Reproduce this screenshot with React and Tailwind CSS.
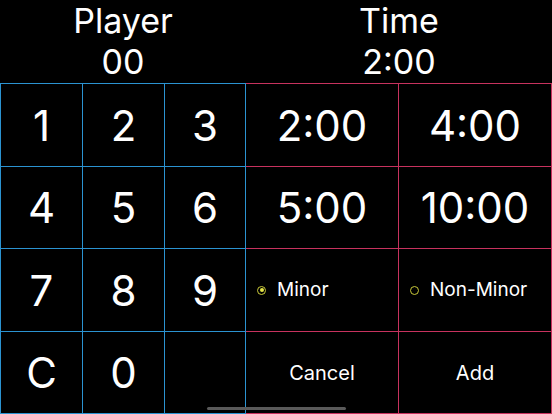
import React, { useState } from "react";

const keys = ["1", "2", "3", "4", "5", "6", "7", "8", "9", "C", "0", ""];
const times = ["2:00", "4:00", "5:00", "10:00"];

const Radio = ({ on }) => (
  <span className="flex h-[9px] w-[9px] items-center justify-center rounded-full border border-[#c9c93a]">
    {on && <span className="h-[4px] w-[4px] rounded-full bg-[#e6e64a]"></span>}
  </span>
);

export default function App() {
  const [player, setPlayer] = useState("00");
  const [time, setTime] = useState("2:00");
  const [minor, setMinor] = useState(true);

  const press = (k) => {
    if (k === "") return;
    if (k === "C") return setPlayer("00");
    setPlayer((p) => (p + k).slice(-2));
  };

  return (
    <div
      className="relative h-[414px] w-[552px] overflow-hidden bg-black text-white"
      style={{ fontFamily: "Inter, 'Open Sans', sans-serif" }}
    >
      {/* Header */}
      <div className="flex h-[83px]">
        <div className="flex w-[246px] flex-col items-center text-[34px] leading-[41px]">
          <span>Player</span>
          <span>{player}</span>
        </div>
        <div className="flex flex-1 flex-col items-center text-[34px] leading-[41px]">
          <span>Time</span>
          <span>{time}</span>
        </div>
      </div>

      <div className="flex h-[331px]">
        {/* Keypad */}
        <div className="grid w-[246px] grid-cols-[82px_82px_81px] grid-rows-[83px_82px_83px_82px] border-l border-t border-[#2b93d1]">
          {keys.map((k, i) => (
            <button
              key={i}
              onClick={() => press(k)}
              className="flex items-center justify-center border-b border-r border-[#2b93d1] text-[42px]"
            >
              {k}
            </button>
          ))}
        </div>

        {/* Time panel */}
        <div className="grid w-[306px] grid-cols-[153px_153px] grid-rows-[83px_82px_83px_82px] border-t border-[#c7325e]">
          {times.map((t) => (
            <button
              key={t}
              onClick={() => setTime(t)}
              className="flex items-center justify-center border-b border-r border-[#c7325e] text-[42px]"
            >
              {t}
            </button>
          ))}
          <button
            onClick={() => setMinor(true)}
            className="flex items-center gap-[11px] border-b border-r border-[#c7325e] pl-[11px] text-[19px]"
          >
            <Radio on={minor} />
            <span>Minor</span>
          </button>
          <button
            onClick={() => setMinor(false)}
            className="flex items-center gap-[11px] border-b border-r border-[#c7325e] pl-[11px] text-[19px]"
          >
            <Radio on={!minor} />
            <span>Non-Minor</span>
          </button>
          <button className="flex items-center justify-center border-b border-r border-[#c7325e] text-[20px]">
            Cancel
          </button>
          <button className="flex items-center justify-center border-b border-r border-[#c7325e] text-[20px]">
            Add
          </button>
        </div>
      </div>

      {/* Home indicator */}
      <div className="absolute bottom-[4px] left-[207px] h-[3px] w-[139px] rounded-full bg-[#5a5a5a]"></div>
    </div>
  );
}
